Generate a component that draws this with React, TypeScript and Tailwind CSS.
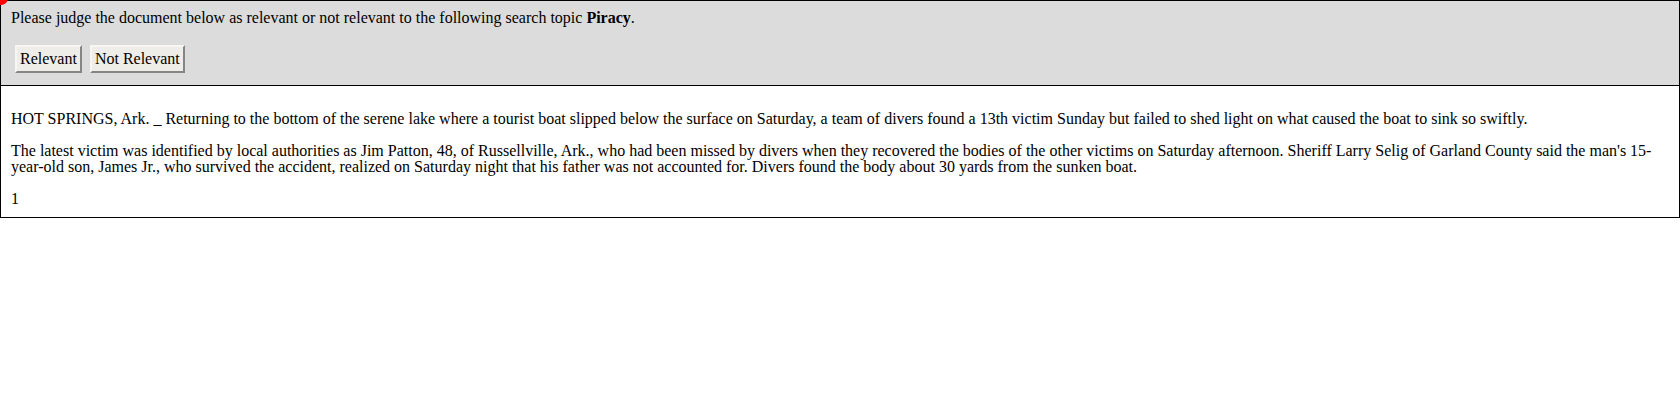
const font = { fontFamily: '"Liberation Serif", "Times New Roman", serif' }

function JudgeButton({ label }: { label: string }) {
  return (
    <button className="h-[28px] border-2 border-t-[#f7f6f3] border-l-[#f7f6f3] border-r-[#858585] border-b-[#858585] bg-[#efede8] px-[3px] text-[16px] leading-none text-black">
      {label}
    </button>
  )
}

export default function App() {
  return (
    <div className="relative min-h-[400px] bg-white text-[16px] text-black" style={font}>
      {/* red dot in the corner */}
      <div className="absolute -left-[6px] -top-[9px] h-[14px] w-[14px] rounded-full bg-[#ff0000]" />

      <div className="border border-black">
        <div className="border-b border-black bg-[#dcdcdc] px-[10px] pt-[7px] pb-[12px]">
          <div className="leading-[19px]">
            Please judge the document below as relevant or not relevant to the following search topic <b>Piracy</b>.
          </div>
          <div className="mt-[18px] flex gap-[8px] pl-[4px]">
            <JudgeButton label="Relevant" />
            <JudgeButton label="Not Relevant" />
          </div>
        </div>

        <div className="px-[10px] pt-[25px] pb-[10px] leading-[16px]">
          <p>
            HOT SPRINGS, Ark. _ Returning to the bottom of the serene lake where a tourist boat slipped below the surface on Saturday, a team of divers found a 13th victim Sunday but failed to shed light on what caused the boat to sink so swiftly.
          </p>
          <p className="mt-[16px]">
            The latest victim was identified by local authorities as Jim Patton, 48, of Russellville, Ark., who had been missed by divers when they recovered the bodies of the other victims on Saturday afternoon. Sheriff Larry Selig of Garland County said the man's 15-year-old son, James Jr., who survived the accident, realized on Saturday night that his father was not accounted for. Divers found the body about 30 yards from the sunken boat.
          </p>
          <p className="mt-[16px]">1</p>
        </div>
      </div>
    </div>
  )
}
